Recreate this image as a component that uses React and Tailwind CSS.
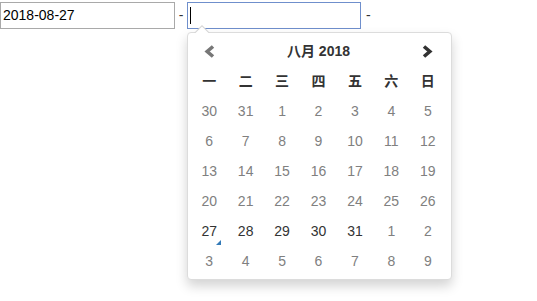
import React from 'react';

const weekDays = ['一', '二', '三', '四', '五', '六', '日'];

// August 2018, week starts Monday
const weeks = [
  [30, 31, 1, 2, 3, 4, 5],
  [6, 7, 8, 9, 10, 11, 12],
  [13, 14, 15, 16, 17, 18, 19],
  [20, 21, 22, 23, 24, 25, 26],
  [27, 28, 29, 30, 31, 1, 2],
  [3, 4, 5, 6, 7, 8, 9],
];

function Chevron({ dir, color }) {
  const d = dir === 'left' ? 'M9 1.5 L3.2 6.5 L9 11.5' : 'M2 1.5 L7.8 6.5 L2 11.5';
  return (
    <svg width="11" height="13" viewBox="0 0 11 13">
      <path d={d} fill="none" stroke={color} strokeWidth="3.6" strokeLinejoin="miter" />
    </svg>
  );
}

function DayCell({ day, enabled, today }) {
  return (
    <div
      className={`relative h-[30px] flex items-center justify-center ${
        enabled ? 'text-[#333]' : 'text-[#808080]'
      }`}
    >
      {day}
      {today && (
        <svg className="absolute left-[25px] top-[24px]" width="5" height="5" viewBox="0 0 5 5">
          <polygon points="5,0 5,5 0,5" fill="#337ab7" />
        </svg>
      )}
    </div>
  );
}

export default function App() {
  return (
    <div
      className="relative min-h-[301px] bg-white text-[14px] text-black"
      style={{ fontFamily: '"Liberation Sans", Arial, "Noto Sans CJK SC", sans-serif' }}
    >
      {/* Range inputs */}
      <div className="flex items-center pt-[2px]">
        <div className="w-[175px] h-[27px] border border-[#a9a9a9] pl-[2px] flex items-center">
          2018-08-27
        </div>
        <span className="w-[12px] text-center text-[#333]">-</span>
        <div className="w-[174px] h-[27px] border border-[#6f8fcc] pl-[2px] flex items-center">
          <span className="w-px h-[17px] bg-black" />
        </div>
        <span className="ml-[5px] text-[#333]">-</span>
      </div>

      {/* Date picker popup */}
      <div className="absolute left-[187px] top-[32px] w-[265px] h-[248px] bg-white border border-[#dcdcdc] rounded-[4px] shadow-[0_6px_12px_rgba(0,0,0,0.175)] pl-[3px] pr-[5px] pt-[3px]">
        <svg className="absolute left-[6px] top-[-8px]" width="16" height="8" viewBox="0 0 16 8">
          <polygon points="0,8 8,0 16,8" fill="#d5d5d5" />
          <polygon points="1.5,8 8,1.5 14.5,8" fill="#fff" />
        </svg>

        <div className="grid grid-cols-7">
          <div className="h-[30px] flex items-center justify-center">
            <Chevron dir="left" color="#777" />
          </div>
          <div className="col-span-5 h-[30px] flex items-center justify-center font-bold text-[#333]">
            八月 2018
          </div>
          <div className="h-[30px] flex items-center justify-center">
            <Chevron dir="right" color="#333" />
          </div>

          {weekDays.map((w) => (
            <div key={w} className="h-[30px] flex items-center justify-center font-bold text-[#333]">
              {w}
            </div>
          ))}

          {weeks.map((week, wi) =>
            week.map((day, di) => {
              const enabled = wi === 4 && di < 5;
              return (
                <DayCell
                  key={`${wi}-${di}`}
                  day={day}
                  enabled={enabled}
                  today={wi === 4 && di === 0}
                />
              );
            })
          )}
        </div>
      </div>
    </div>
  );
}
